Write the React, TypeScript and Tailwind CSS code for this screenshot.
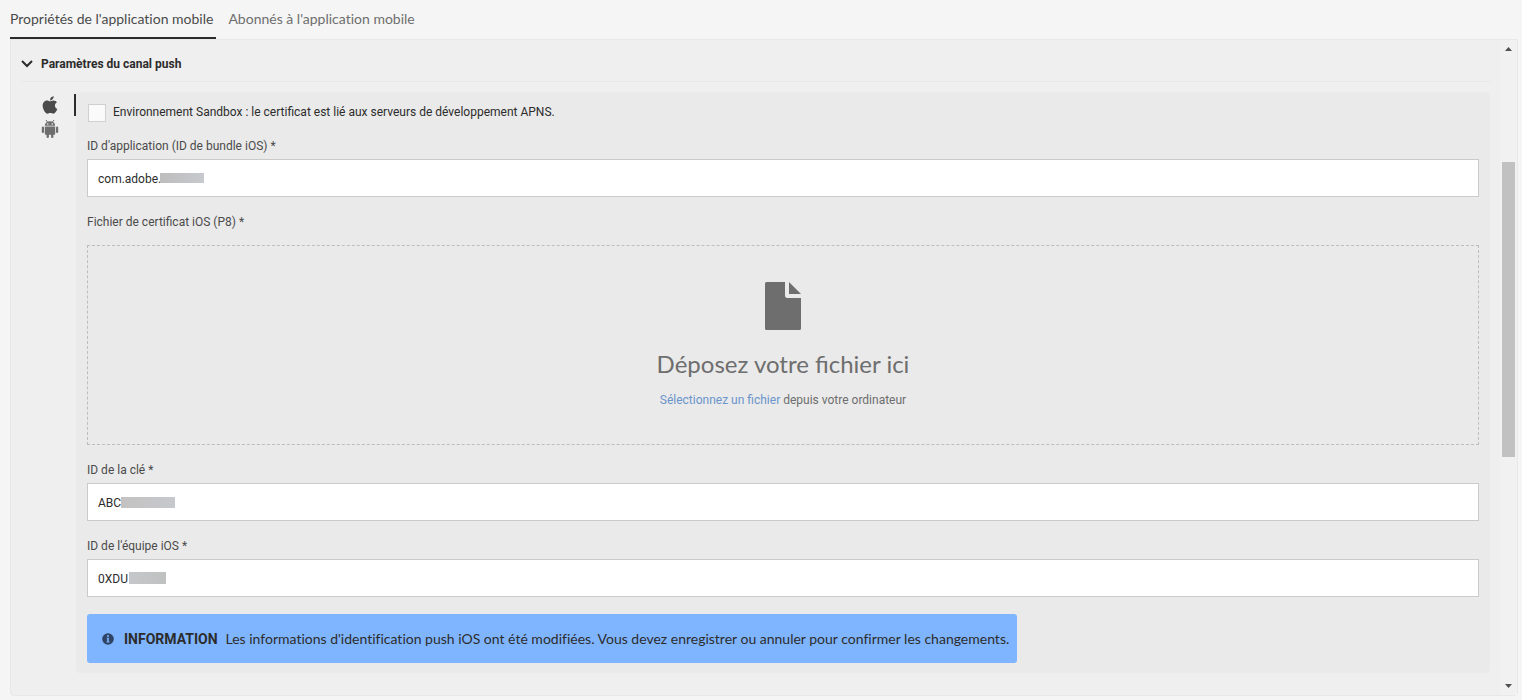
import type { ReactNode } from "react";
import { FaApple } from "react-icons/fa";

function AndroidIcon() {
  return (
    <svg viewBox="0 0 18 20" className="h-5 w-[18px]" fill="currentColor" aria-hidden="true">
      <path d="M3.8 6.8A5.2 4.6 0 0 1 14.2 6.8Z" />
      <path d="M6.6 3.2 5 1M11.4 3.2 13 1" stroke="currentColor" strokeWidth="1" />
      <circle cx="6.8" cy="5" r=".8" fill="#efefef" />
      <circle cx="11.2" cy="5" r=".8" fill="#efefef" />
      <path d="M3.8 7.6h10.4v7.2a1 1 0 0 1-1 1H4.8a1 1 0 0 1-1-1Z" />
      <rect x=".8" y="7.4" width="2.2" height="6.6" rx="1.1" />
      <rect x="15" y="7.4" width="2.2" height="6.6" rx="1.1" />
      <rect x="5.6" y="14" width="2.3" height="5" rx="1.1" />
      <rect x="10.1" y="14" width="2.3" height="5" rx="1.1" />
    </svg>
  );
}

function TextField({ id, label, value, mask }: { id: string; label: string; value: string; mask: string }) {
  return (
    <div className="mt-[14px]">
      <label htmlFor={id} className="block leading-[22px] text-[#4b4b4b]">{label}</label>
      <div className="relative mt-[2px]">
        <input
          id={id}
          type="text"
          defaultValue={value}
          className="block h-[38px] w-full border border-[#cacaca] bg-white px-[10px] pt-[2px] text-[#2c2c2c] outline-none"
        />
        <span className={`absolute ${mask}`} />
      </div>
    </div>
  );
}

function Tab({ active, children }: { active?: boolean; children: ReactNode }) {
  return (
    <button
      type="button"
      role="tab"
      aria-selected={!!active}
      className={`h-[39px] border-b-2 pr-[3px] font-[Lato,sans-serif] text-sm leading-5 [font-variant-ligatures:none] ${active ? "border-[#2c2c2c] text-[#4b4b4b]" : "border-transparent text-[#6e6e6e]"}`}
    >
      {children}
    </button>
  );
}

export default function App() {
  return (
    <main className="min-h-screen bg-[#f5f5f5] pr-1 pl-[10px] font-[Roboto,sans-serif] text-xs text-[#2c2c2c]">
      <div role="tablist" className="flex gap-3">
        <Tab active>Propriétés de l'application mobile</Tab>
        <Tab>Abonnés à l'application mobile</Tab>
      </div>

      <section className="flex rounded-b border border-[#e8e8e8] bg-[#efefef]">
        <div className="flex-1 px-[10px] pb-[22px]">
          <button type="button" aria-expanded="true" className="flex h-[42px] w-full items-center gap-2 border-b border-[#e8e8e8] pt-[6px] text-left font-bold">
            <svg viewBox="0 0 12 8" className="h-2 w-3" fill="none" stroke="currentColor" strokeWidth="2" aria-hidden="true">
              <path d="m1 1 5 5 5-5" />
            </svg>
            Paramètres du canal push
          </button>

          <div className="mt-[10px] flex">
            <div className="flex w-[55px] shrink-0 items-start justify-between pl-5">
              <div className="flex flex-col pt-[3px] text-[#6e6e6e]">
                <button type="button" aria-label="iOS" className="h-5 text-[#4b4b4b]"><FaApple className="h-5 w-[18px]" /></button>
                <button type="button" aria-label="Android" className="mt-1"><AndroidIcon /></button>
              </div>
              <div className="mt-[2px] h-[22px] w-[2px] bg-[#2c2c2c]" />
            </div>

            <div className="flex-1 rounded bg-[#eaeaea] px-[11px] pt-[9px] pb-[10px]">
              <div className="flex h-5 items-start gap-[7px] pl-px">
                <input id="sandbox" type="checkbox" className="mt-[3px] h-[18px] w-[18px] shrink-0 appearance-none border border-[#d0d0d0] bg-[#fafafa]" />
                <label htmlFor="sandbox" className="leading-[22px]">
                  Environnement Sandbox : le certificat est lié aux serveurs de développement APNS.
                </label>
              </div>

              <TextField
                id="app-id"
                label="ID d'application (ID de bundle iOS) *"
                value="com.adobe."
                mask="top-[14px] left-[73px] h-[10px] w-[44px] bg-linear-to-r from-[#bdbdbd] to-[#c8c9ce]"
              />

              <div className="mt-[14px]">
                <p className="leading-[22px] text-[#4b4b4b]">Fichier de certificat iOS (P8) *</p>
                <div className="mt-3 flex h-[200px] flex-col items-center border border-dashed border-[#bdbdbd] pt-9 text-[#6e6e6e]">
                  <svg viewBox="0 0 36 48" className="h-12 w-9" fill="currentColor" aria-hidden="true">
                    <path d="M1.5 0H20v13.5A2.5 2.5 0 0 0 22.5 16H36v30.5A1.5 1.5 0 0 1 34.5 48h-33A1.5 1.5 0 0 1 0 46.5v-45A1.5 1.5 0 0 1 1.5 0Z" />
                    <path d="M24 0v12h12Z" />
                  </svg>
                  <h2 className="mt-[18px] font-[Lato,sans-serif] text-2xl leading-8">Déposez votre fichier ici</h2>
                  <p className="mt-[9px] leading-[22px]">
                    <a href="#fichier" className="text-[#6b94cb]">Sélectionnez un fichier</a> depuis votre ordinateur
                  </p>
                </div>
              </div>

              <TextField
                id="key-id"
                label="ID de la clé *"
                value="ABC"
                mask="top-[14px] left-[34px] h-[11px] w-[54px] bg-linear-to-r from-[#c4c2c1] to-[#c6c8cd]"
              />
              <TextField
                id="team-id"
                label="ID de l'équipe iOS *"
                value="0XDU"
                mask="top-[13px] left-[42px] h-[12px] w-[37px] bg-linear-to-r from-[#c5c8ca] to-[#bfc1c1]"
              />

              <div role="status" className="mt-[17px] flex min-h-[49px] w-fit items-center rounded-[3px] bg-[#7fb5ff] pr-2 pl-[15px] font-[Lato,sans-serif] text-sm [font-variant-ligatures:none]">
                <svg viewBox="0 0 12 12" className="h-3 w-3 shrink-0" aria-hidden="true">
                  <circle cx="6" cy="6" r="5.8" fill="#2f4464" />
                  <circle cx="6" cy="3" r="1" fill="#7fb5ff" />
                  <path d="M4.7 4.8h2.1v3.8h.7v.9h-3v-.9h.7V5.7h-.5Z" fill="#7fb5ff" />
                </svg>
                <strong className="ml-[10px] font-[Roboto,sans-serif] font-bold">INFORMATION</strong>
                <span className="ml-2">
                  Les informations d'identification push iOS ont été modifiées. Vous devez enregistrer ou annuler pour confirmer les changements.
                </span>
              </div>
            </div>
          </div>
        </div>

        <div className="flex w-[17px] shrink-0 flex-col items-center bg-[#f1f1f1] pt-[7px] pr-px pb-[7px] text-[#505050]" aria-hidden="true">
          <svg viewBox="0 0 7 4" className="h-1 w-[7px]" fill="currentColor"><path d="M0 4 3.5 0 7 4Z" /></svg>
          <div className="flex w-full flex-1 flex-col items-center py-1">
            <div className="basis-[107px]" />
            <div className="w-[13px] basis-[295px] bg-[#c1c1c1]" />
          </div>
          <svg viewBox="0 0 7 4" className="h-1 w-[7px]" fill="currentColor"><path d="M0 0 3.5 4 7 0Z" /></svg>
        </div>
      </section>
    </main>
  );
}
